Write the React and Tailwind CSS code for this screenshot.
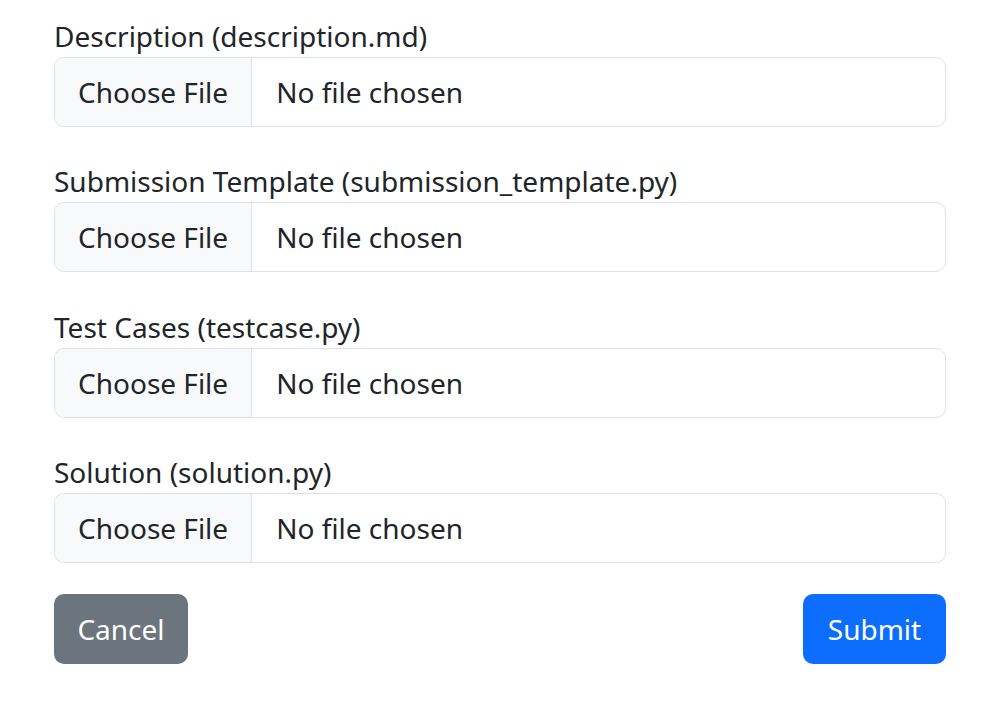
const fields = [
  'Description (description.md)',
  'Submission Template (submission_template.py)',
  'Test Cases (testcase.py)',
  'Solution (solution.py)',
];

const FileField = ({ label }) => (
  <div className="mb-[33.4px]">
    <div className="h-[42px] leading-[42px]">{label}</div>
    <div className="flex h-[70px] border border-[#dee2e6] rounded-[10px] overflow-hidden bg-white">
      <div className="flex items-center px-[23px] bg-[#f8f9fa] border-r border-[#dee2e6]">Choose File</div>
      <div className="flex items-center pl-[24px]">No file chosen</div>
    </div>
  </div>
);

export default function App() {
  return (
    <div
      className="min-h-screen bg-white text-[#212529] text-[28px] pl-[54px] pr-[58px] pt-[15px] w-[1004px]"
      style={{ fontFamily: '"Noto Sans", "Open Sans", sans-serif' }}
    >
      {fields.map((f) => (
        <FileField key={f} label={f} />
      ))}
      <div className="flex justify-between -mt-[2.6px]">
        <button className="h-[70px] w-[134px] rounded-[10px] bg-[#6c757d] text-white">Cancel</button>
        <button className="h-[70px] w-[143px] rounded-[10px] bg-[#0d6efd] text-white">Submit</button>
      </div>
    </div>
  );
}
